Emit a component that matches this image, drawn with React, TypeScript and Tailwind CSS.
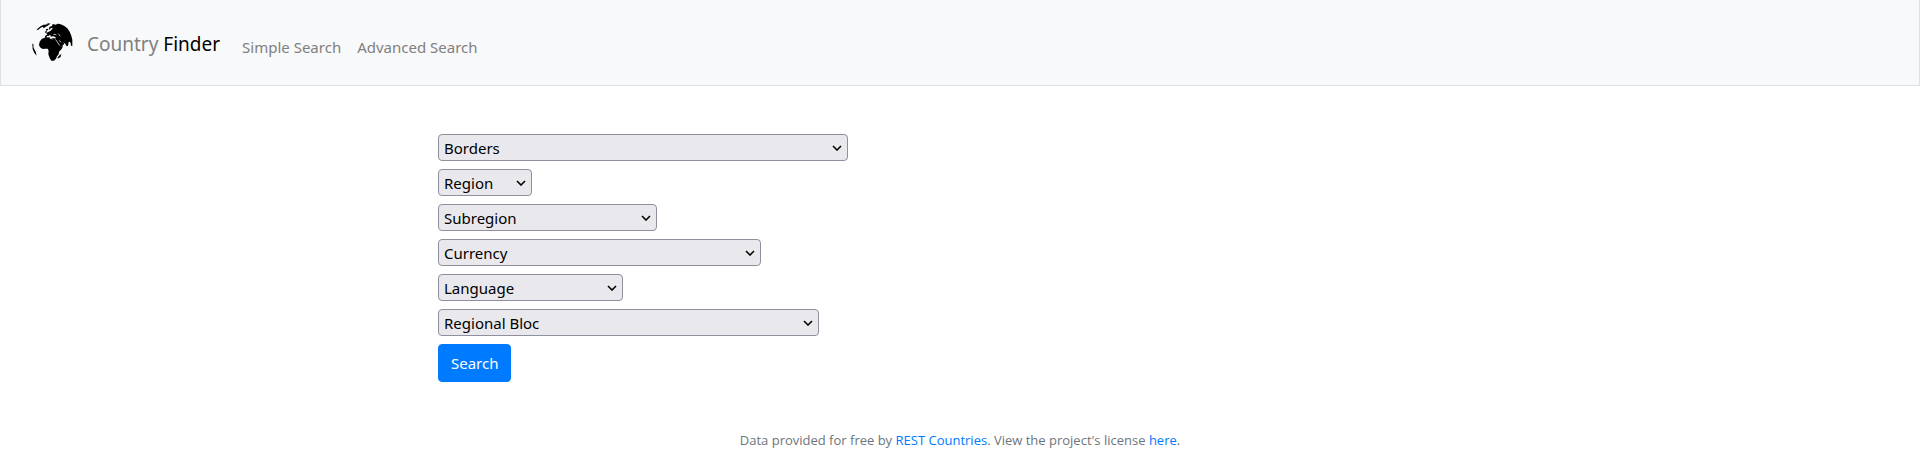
import React from "react";

type Filter = { id: string; label: string; width: string };

const filters: Filter[] = [
  { id: "borders", label: "Borders", width: "w-[410px]" },
  { id: "region", label: "Region", width: "w-[94px]" },
  { id: "subregion", label: "Subregion", width: "w-[219px]" },
  { id: "currency", label: "Currency", width: "w-[323px]" },
  { id: "language", label: "Language", width: "w-[185px]" },
  { id: "regional-bloc", label: "Regional Bloc", width: "w-[381px]" },
];

function Globe() {
  return (
    <svg viewBox="36 36 123 114" className="h-[38px] w-[41px] shrink-0" fill="#000" aria-hidden="true">
      <path d="M98 39 L107 41 L113 38 L120 39 L132 44 L142 52 L149 62 L154 74 L157 87 L157 105 L153 104 L152 96 L149 92 L146 93 L144 104 L140 106 L136 98 L131 95 L128 93 L132 97 L131 101 L127 104 L120 106 L115 99 L109 89 L106 83 L99 83 L93 82 L88 80 L81 79 L76 82 L75 76 L78 73 L82 71 L79 67 L83 64 L91 60 L96 55 L98 52 L96 50 L92 52 L89 56 L86 54 L89 47 L96 45 Z" />
      <path d="M65 84 L77 79 L87 79 L91 84 L98 85 L106 83 L111 90 L117 102 L121 106 L129 105 L125 114 L117 122 L116 130 L111 136 L108 143 L102 149 L94 149 L89 141 L85 130 L86 119 L83 113 L76 113 L68 114 L60 109 L57 102 L59 92 Z" />
      <path d="M49 58 L55 51 L63 45 L71 41 L77 41 L69 47 L62 50 L55 56 Z M69 46 L75 41 L84 39 L90 39 L83 44 L76 48 L72 52 L70 50 Z M79 39 L86 37 L92 38 L86 40 Z M78 55 L84 53 L84 57 L78 60 Z M75 62 L79 59 L81 64 L77 67 Z M37 97 L41 102 L40 108 L43 115 L47 122 L50 134 L43 126 L38 115 Z M114 138 L117 134 L124 129 L122 137 L116 142 L112 142 Z" />
      <g fill="none" stroke="#f8f9fa" strokeLinecap="round" strokeLinejoin="round">
        <path strokeWidth="4" d="M82 77 L88 76 L93 79 L99 78 L105 80" />
        <path strokeWidth="2" d="M88 73 L92 75 M101 70 L108 71 M116 69 L120 75 M107 86 L112 93 L118 102 M118 89 L123 93" />
      </g>
    </svg>
  );
}

function FilterSelect({ id, label, width }: Filter) {
  return (
    <div className={`grid max-w-full items-center ${width}`}>
      <select
        id={id}
        name={id}
        aria-label={label}
        defaultValue=""
        className="col-start-1 row-start-1 h-[27px] w-full appearance-none rounded border border-[#8f8f9d] bg-[#e9e9ed] pr-6 pl-[5px] text-black"
      >
        <option value="">{label}</option>
      </select>
      <svg
        viewBox="0 0 10 6"
        className="pointer-events-none col-start-1 row-start-1 mr-[6px] h-[6px] w-[10px] justify-self-end"
        fill="none"
        stroke="#000"
        strokeWidth="1.6"
        aria-hidden="true"
      >
        <path d="M1 1l4 4 4-4" />
      </svg>
    </div>
  );
}

export default function App() {
  return (
    <div className="bg-white font-['Noto_Sans',sans-serif] text-[15px] leading-6 text-[#212529]">
      <header className="flex h-[86px] items-center border border-t-0 border-[#dee2e6] bg-[#f8f9fa] pb-[2px] pl-[31px]">
        <a href="#home" className="flex items-center gap-[14px] text-[19px] leading-8 text-[#808080]">
          <Globe />
          <span className="pt-[5px]">
            Country <span className="text-black">Finder</span>
          </span>
        </a>
        <nav className="ml-[22px] flex gap-4 pt-[10px] text-[#808080]">
          <a href="#simple">Simple Search</a>
          <a href="#advanced">Advanced Search</a>
        </nav>
      </header>
      <main className="mx-auto max-w-[1044px] pt-12">
        <form className="flex flex-col items-start gap-2" onSubmit={(e) => e.preventDefault()}>
          {filters.map((f) => (
            <FilterSelect key={f.id} {...f} />
          ))}
          <button type="submit" className="h-[38px] rounded border border-[#007bff] bg-[#007bff] px-3 text-white">
            Search
          </button>
        </form>
      </main>
      <footer className="mt-12 pb-6 text-center font-['Open_Sans',sans-serif] text-[13px] leading-5 text-[#6c757d]">
        Data provided for free by{" "}
        <a href="#rest-countries" className="text-[#007bff]">
          REST Countries
        </a>
        . View the project's license{" "}
        <a href="#license" className="text-[#007bff]">
          here
        </a>
        .
      </footer>
    </div>
  );
}
